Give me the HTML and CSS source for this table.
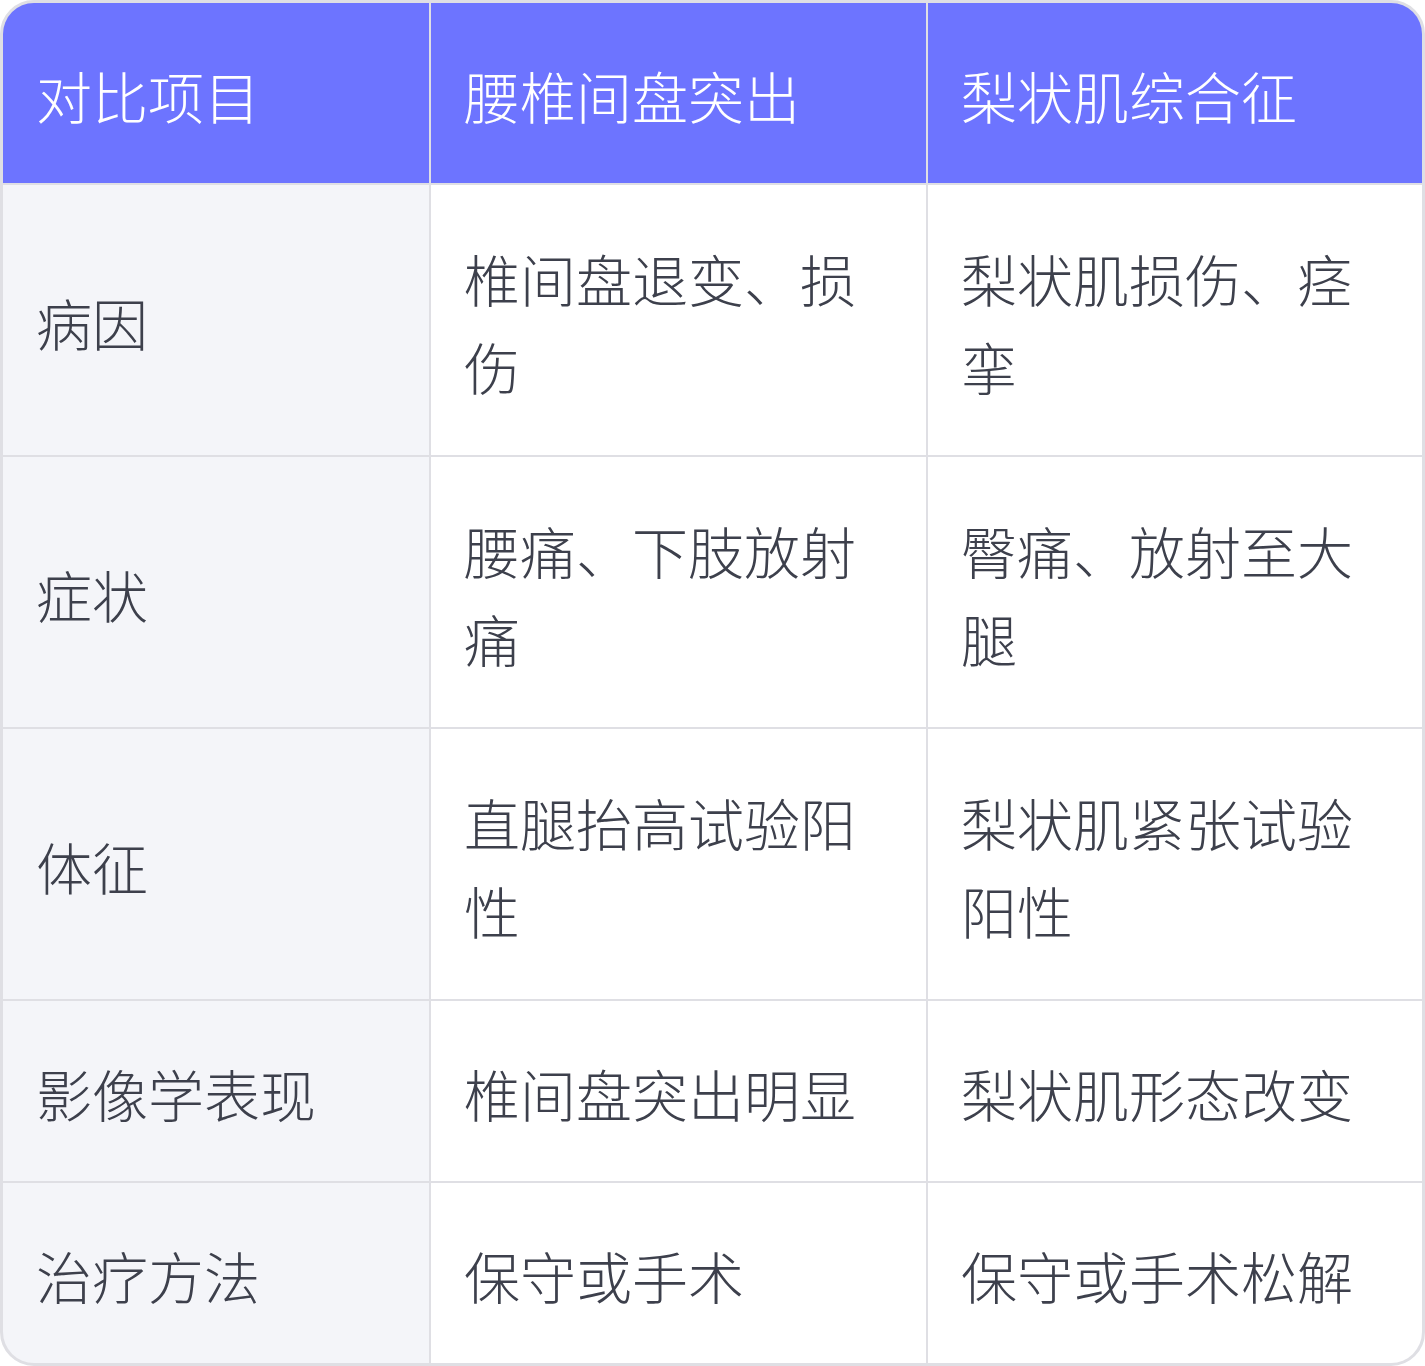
FILE: index.html
```html
<!DOCTYPE html>
<html lang="zh">
<head>
<meta charset="utf-8">
<link rel="stylesheet" href="styles.css">
</head>
<body>
<div class="table">
  <div class="cell head">对比项目</div>
  <div class="cell head">腰椎间盘突出</div>
  <div class="cell head">梨状肌综合征</div>

  <div class="cell label">病因</div>
  <div class="cell">椎间盘退变、损伤</div>
  <div class="cell">梨状肌损伤、痉挛</div>

  <div class="cell label">症状</div>
  <div class="cell">腰痛、下肢放射痛</div>
  <div class="cell">臀痛、放射至大腿</div>

  <div class="cell label">体征</div>
  <div class="cell">直腿抬高试验阳性</div>
  <div class="cell">梨状肌紧张试验阳性</div>

  <div class="cell label">影像学表现</div>
  <div class="cell">椎间盘突出明显</div>
  <div class="cell">梨状肌形态改变</div>

  <div class="cell label">治疗方法</div>
  <div class="cell">保守或手术</div>
  <div class="cell">保守或手术松解</div>
</div>
</body>
</html>
```

FILE: styles.css
```css
html, body {
  margin: 0;
  padding: 0;
  background: #ffffff;
}

.table {
  box-sizing: border-box;
  width: 1425px;
  height: 1366px;
  border: 3px solid #dfdfe4;
  border-radius: 34px;
  overflow: hidden;
  display: grid;
  grid-template-columns: 426px 495px 494px;
  grid-template-rows: 180px 270px 270px 270px 180px 180px;
  gap: 2px;
  background: #dfdfe4;
  font-family: "Noto Sans CJK SC", "Noto Sans", sans-serif;
  font-size: 56px;
  font-weight: 300;
  line-height: 88px;
  color: #3d404c;
}

.cell {
  background: #ffffff;
  padding: 4px 28px 0 33px;
  display: flex;
  align-items: center;
  word-break: break-all;
}

.cell.head {
  background: #6d74ff;
  color: #ffffff;
}

.cell.label {
  background: #f4f5f9;
}
```
